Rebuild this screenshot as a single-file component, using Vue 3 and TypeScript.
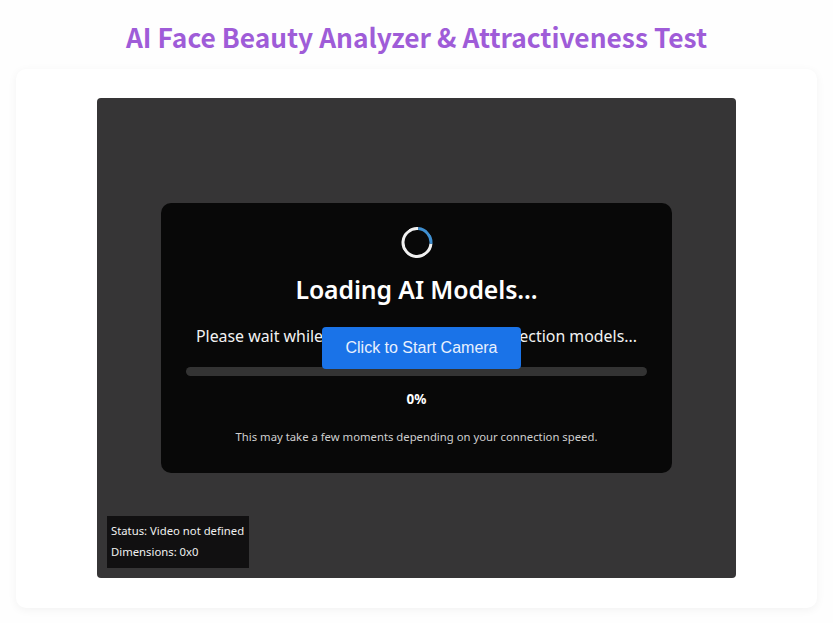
<script setup lang="ts">
const title: string = 'AI Face Beauty Analyzer & Attractiveness Test'
</script>

<template>
  <main class="page">
    <h1 class="title">{{ title }}</h1>
    <section class="card">
      <div class="stage">
        <div class="overlay">
          <div class="spinner"></div>
          <h2 class="heading">Loading AI Models...</h2>
          <p class="message">Please wait while we're loading the face detection models...</p>
          <div class="track"></div>
          <div class="percent">0%</div>
          <p class="note">This may take a few moments depending on your connection speed.</p>
        </div>
        <button class="start">Click to Start Camera</button>
        <div class="status">
          <div>Status: Video not defined</div>
          <div>Dimensions: 0x0</div>
        </div>
      </div>
    </section>
  </main>
</template>

<style scoped>
.page {
  width: 833px;
  height: 623px;
  box-sizing: border-box;
  padding: 18px 16px 0;
  background: #fefefe;
  font-family: "Noto Sans", "Open Sans", sans-serif;
  overflow: hidden;
}
.title {
  margin: 0 0 13px;
  height: 38px;
  line-height: 38px;
  text-align: center;
  font-family: "Noto Sans CJK SC", "Noto Sans", sans-serif;
  font-size: 26.35px;
  font-weight: 700;
  color: #9f5cd8;
}
.card {
  height: 539px;
  box-sizing: border-box;
  padding-top: 29px;
  background: #fff;
  border-radius: 10px;
  box-shadow: 0 2px 10px rgba(0, 0, 0, 0.05);
  display: flex;
  justify-content: center;
}
.stage {
  position: relative;
  width: 639px;
  height: 480px;
  background: #363536;
  border-radius: 4px;
}
.overlay {
  position: absolute;
  left: 64px;
  top: 105px;
  width: 511px;
  height: 270px;
  box-sizing: border-box;
  padding: 24px 25px 0;
  background: #080808;
  border-radius: 10px;
  color: #fff;
  display: flex;
  flex-direction: column;
  align-items: center;
}
.spinner {
  width: 31px;
  height: 31px;
  box-sizing: border-box;
  border: 3px solid #f0f0f0;
  border-right-color: #3f8fd0;
  border-radius: 50%;
  transform: translateX(0.5px) rotate(-40deg);
}
.heading {
  margin: 13px 0 0;
  height: 36px;
  line-height: 36px;
  font-size: 24.8px;
  font-weight: 600;
  letter-spacing: -0.1px;
}
.message {
  margin: 16px 0 0;
  height: 26px;
  line-height: 26px;
  font-size: 15.9px;
  white-space: nowrap;
  color: #f2f2f2;
}
.track {
  width: 461px;
  height: 9px;
  margin-top: 18px;
  background: #333;
  border-radius: 5px;
}
.percent {
  margin-top: 13px;
  height: 20px;
  line-height: 20px;
  font-size: 13.5px;
  font-weight: 700;
}
.note {
  margin: 19px 0 0;
  height: 18px;
  line-height: 18px;
  font-size: 11.3px;
  color: #cfcfcf;
  white-space: nowrap;
}
.start {
  position: absolute;
  left: 225px;
  top: 229px;
  width: 199px;
  height: 42px;
  border: 0;
  border-radius: 4px;
  background: #1a73e8;
  color: #e8f0fe;
  font-family: "Liberation Sans", Arial, sans-serif;
  font-size: 16px;
  padding: 0;
}
.status {
  position: absolute;
  left: 10px;
  top: 418px;
  width: 142px;
  height: 52px;
  box-sizing: border-box;
  padding: 4px 4px;
  background: #111011;
  color: #f0f0f0;
  font-size: 11.3px;
  line-height: 21px;
  white-space: nowrap;
}
</style>
